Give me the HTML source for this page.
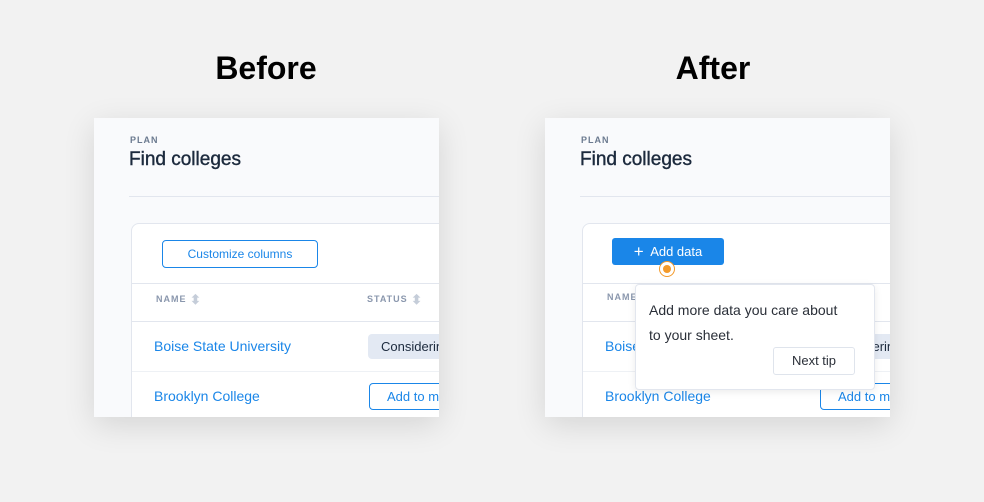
<!DOCTYPE html><html><head><style>
body{margin:0;width:984px;height:502px;background:#f2f2f2;font-family:"Liberation Sans",sans-serif;position:relative;overflow:hidden}
.h{position:absolute;top:50px;font-weight:bold;font-size:32px;color:#000;width:200px;text-align:center}
.p{position:absolute;top:118px;width:345px;height:299px;background:#f9fafc;overflow:hidden;box-shadow:0 8px 30px rgba(0,0,0,.12)}
.a{position:absolute}
.plan{left:36px;top:17px;font-size:9px;letter-spacing:1px;color:#6b7a8f;font-weight:bold}
.t{left:35px;top:31px;font-size:19px;color:#1c2a3d;-webkit-text-stroke:0.4px #1c2a3d}
.div{left:35px;top:78px;width:400px;height:1px;background:#e2e6ee}
.card{left:37px;top:105px;width:400px;height:260px;background:#fff;border:1px solid #e2e6ee;border-radius:8px}
.ln{left:0;width:400px;height:1px;background:#e2e6ee}
.th{font-size:9px;letter-spacing:1px;color:#8a97ad;font-weight:bold}
.ar{font-size:13px;color:#c5cdd9;vertical-align:-2px}
.lk{font-size:14px;color:#1a86e8}
</style></head><body>
<div class="h" style="left:166px">Before</div>
<div class="h" style="left:613px">After</div>

<div class="p" style="left:94px">
<div class="a plan">PLAN</div><div class="a t">Find colleges</div><div class="a div"></div>
<div class="a card">
<div class="a" style="left:30px;top:16px;width:154px;height:26px;border:1px solid #1a86e8;border-radius:4px;color:#1a86e8;font-size:12px;text-align:center;line-height:26px">Customize columns</div>
<div class="a ln" style="top:59px"></div>
<div class="a th" style="left:24px;top:68px">NAME <span class="ar">⬍</span></div>
<div class="a th" style="left:235px;top:68px">STATUS <span class="ar">⬍</span></div>
<div class="a ln" style="top:97px"></div>
<div class="a lk" style="left:22px;top:114px">Boise State University</div>
<div class="a" style="left:236px;top:110px;width:120px;height:25px;background:#e3e9f3;border-radius:4px;font-size:13px;color:#1c2a3d;line-height:25px;padding-left:13px">Considering</div>
<div class="a ln" style="top:147px;background:#eef1f5"></div>
<div class="a lk" style="left:22px;top:164px">Brooklyn College</div>
<div class="a" style="left:237px;top:159px;width:120px;height:25px;border:1px solid #1a86e8;border-radius:4px;font-size:13px;color:#1a86e8;line-height:25px;padding-left:17px">Add to my list</div>
</div></div>

<div class="p" style="left:545px">
<div class="a plan">PLAN</div><div class="a t">Find colleges</div><div class="a div"></div>
<div class="a card">
<div class="a" style="left:29px;top:14px;width:112px;height:27px;background:#1a86e8;border-radius:3px;color:#fff;font-size:13px;line-height:27px;text-align:center"><span style="font-size:17px;vertical-align:-1px">+</span>&nbsp; Add data</div>
<div class="a ln" style="top:59px"></div>
<div class="a th" style="left:24px;top:68px">NAME</div>
<div class="a ln" style="top:97px"></div>
<div class="a lk" style="left:22px;top:114px">Boise State University</div>
<div class="a" style="left:236px;top:110px;width:120px;height:25px;background:#e3e9f3;border-radius:4px;font-size:13px;color:#1c2a3d;line-height:25px;padding-left:13px">Considering</div>
<div class="a ln" style="top:147px;background:#eef1f5"></div>
<div class="a lk" style="left:22px;top:164px">Brooklyn College</div>
<div class="a" style="left:237px;top:159px;width:120px;height:25px;border:1px solid #1a86e8;border-radius:4px;font-size:13px;color:#1a86e8;line-height:25px;padding-left:17px">Add to my list</div>
</div>
<div class="a" style="left:90px;top:166px;width:238px;height:104px;background:#fff;border:1px solid #e2e6ee;border-radius:4px;box-shadow:0 2px 8px rgba(0,0,0,.08)">
<div class="a" style="left:13px;top:13px;font-size:14px;line-height:25px;color:#2a2f38;width:190px">Add more data you care about to your sheet.</div>
<div class="a" style="left:137px;top:62px;width:80px;height:26px;border:1px solid #dfe4ec;border-radius:3px;font-size:13px;color:#2a2f38;text-align:center;line-height:26px">Next tip</div>
</div>
<div class="a" style="left:114px;top:143px;width:14px;height:14px;border:1px solid #f39a2b;border-radius:50%;background:#fff"></div>
<div class="a" style="left:118px;top:147px;width:8px;height:8px;border-radius:50%;background:#f39a2b"></div>
</div>
</body></html>
